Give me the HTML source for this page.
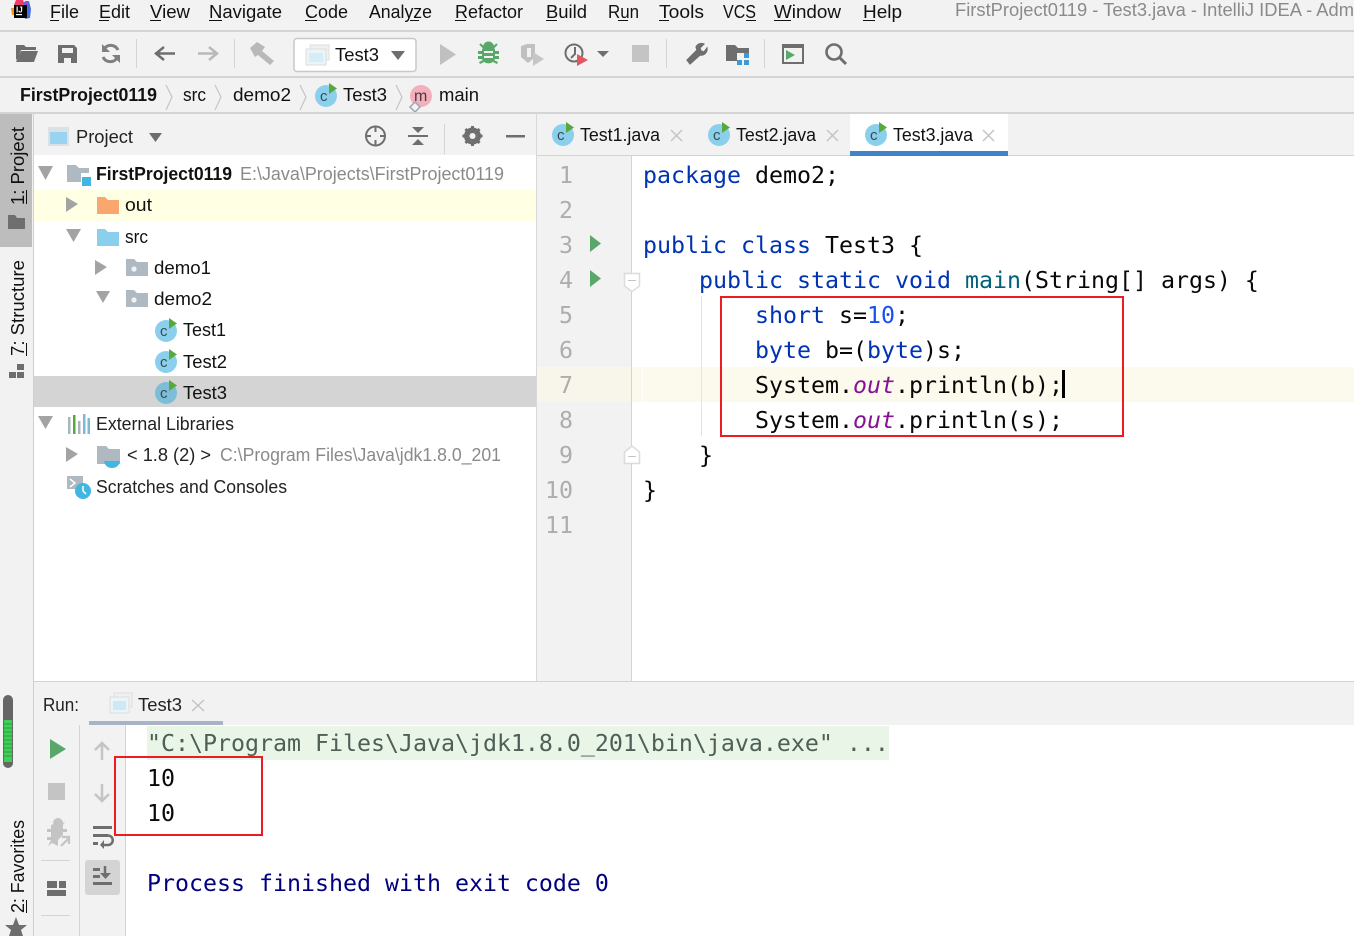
<!DOCTYPE html>
<html><head><meta charset="utf-8"><title>IntelliJ IDEA</title>
<style>
html,body{margin:0;padding:0;background:#f2f2f2;overflow:hidden}
svg{display:block}
text{font-family:"Liberation Sans",sans-serif;font-size:18px;fill:#111;white-space:pre}
.code text,text.m{font-family:"DejaVu Sans Mono","Liberation Mono",monospace;font-size:23.26px;fill:#080808}
.k{fill:#0033b3}.n{fill:#1750eb}.f{fill:#871094;font-style:italic}.me{fill:#00627a}
.g{fill:#6e6e6e}.ln{fill:#adadad;font-family:"DejaVu Sans Mono",monospace;font-size:23.26px}
.c{font-size:15px;fill:#3b4a55}
</style></head><body>
<svg width="1354" height="936" viewBox="0 0 1354 936" xmlns="http://www.w3.org/2000/svg">
<defs>
<g id="cl"><circle cx="0" cy="0" r="11" fill="#8ad0ec"/><path d="M3 -13L11 -7.500L3 -2Z" fill="#59a83c"/></g>
<g id="fd"><path d="M0 0H8L11 3H22V17H0Z" fill="#afb9c1"/><circle cx="8" cy="10" r="2.600" fill="#f2f2f2"/></g>
</defs>
<rect width="1354" height="936" fill="#f2f2f2"/>

<!-- logo -->
<g><path d="M14 5L16 0H23L25 5Z" fill="#ef3a6a"/><path d="M11 8H15V15H12Z" fill="#f7941d"/><path d="M24 2L29 1L31 9L30 18L25 19Z" fill="#4a6be0"/><path d="M25 1H28V5H25Z" fill="#c13bc0"/><rect x="14" y="5" width="13" height="13" fill="#000"/><rect x="16" y="14" width="6" height="1.200" fill="#fff"/><text x="16" y="12.500" style="font-size:8px;font-weight:bold;fill:#fff">IJ</text></g>

<!-- menu -->
<g>
<text x="50" y="18" textLength="29" lengthAdjust="spacingAndGlyphs">File</text><rect x="50" y="20" width="9" height="1" fill="#111"/>
<text x="99" y="18" textLength="31" lengthAdjust="spacingAndGlyphs">Edit</text><rect x="99" y="20" width="10" height="1" fill="#111"/>
<text x="150" y="18" textLength="40" lengthAdjust="spacingAndGlyphs">View</text><rect x="150" y="20" width="11" height="1" fill="#111"/>
<text x="209" y="18" textLength="73" lengthAdjust="spacingAndGlyphs">Navigate</text><rect x="209" y="20" width="13" height="1" fill="#111"/>
<text x="305" y="18" textLength="43" lengthAdjust="spacingAndGlyphs">Code</text><rect x="305" y="20" width="12" height="1" fill="#111"/>
<text x="369" y="18" textLength="63" lengthAdjust="spacingAndGlyphs">Analyze</text><rect x="410" y="20" width="9" height="1" fill="#111"/>
<text x="455" y="18" textLength="68" lengthAdjust="spacingAndGlyphs">Refactor</text><rect x="455" y="20" width="11" height="1" fill="#111"/>
<text x="546" y="18" textLength="41" lengthAdjust="spacingAndGlyphs">Build</text><rect x="546" y="20" width="11" height="1" fill="#111"/>
<text x="608" y="18" textLength="31" lengthAdjust="spacingAndGlyphs">Run</text><rect x="618" y="20" width="10" height="1" fill="#111"/>
<text x="659" y="18" textLength="45" lengthAdjust="spacingAndGlyphs">Tools</text><rect x="659" y="20" width="10" height="1" fill="#111"/>
<text x="723" y="18" textLength="33" lengthAdjust="spacingAndGlyphs">VCS</text><rect x="746" y="20" width="10" height="1" fill="#111"/>
<text x="774" y="18" textLength="67" lengthAdjust="spacingAndGlyphs">Window</text><rect x="774" y="20" width="17" height="1" fill="#111"/>
<text x="863" y="18" textLength="39" lengthAdjust="spacingAndGlyphs">Help</text><rect x="863" y="20" width="12" height="1" fill="#111"/>
<text x="955" y="16" textLength="399" lengthAdjust="spacingAndGlyphs" style="fill:#8a8a8a">FirstProject0119 - Test3.java - IntelliJ IDEA - Adm</text>
</g>
<rect y="30" width="1354" height="2" fill="#d4d4d4"/>

<!-- toolbar -->
<g>
<path d="M16 45H24L26 47H36V50H21L18 58L16 60ZM21 51H38L34 62H16Z" fill="#6e6e6e"/>
<path d="M58 45H74L77 48V63H58ZM62 48V53H73V48ZM64 58V63H71V58Z" fill="#6e6e6e" fill-rule="evenodd"/>
<path d="M118 50A8 8 0 0 0 104 49M103 57A8 8 0 0 0 117 58" fill="none" stroke="#7f7f7f" stroke-width="3"/><path d="M102 44V52H110ZM120 63V55H112Z" fill="#7f7f7f"/>
<rect x="136" y="39" width="1" height="29" fill="#d4d4d4"/>
<path d="M175 53.500H157M164 47L156 53.500L164 60" fill="none" stroke="#6e6e6e" stroke-width="2.500"/>
<path d="M198 53.500H216M209 47L217 53.500L209 60" fill="none" stroke="#b9b9b9" stroke-width="2.500"/>
<rect x="234" y="39" width="1" height="29" fill="#d4d4d4"/>
<path d="M250 48L257 42L265 47L262 51L274 61L270 65L258 55L255 57Z" fill="#b9b9b9"/>
<rect x="294" y="38.500" width="122" height="33" rx="3" fill="#fff" stroke="#c8c8c8" stroke-width="1.500"/>
<rect x="310" y="45" width="19" height="15" fill="#f0f0f0" stroke="#dedede"/><rect x="306" y="49" width="20" height="16" fill="#eaf5fa" stroke="#dedede"/><rect x="309" y="53" width="14" height="9" fill="#d6edf7"/>
<text x="335" y="61" textLength="44" lengthAdjust="spacingAndGlyphs">Test3</text>
<path d="M391 51H405L398 60Z" fill="#6e6e6e"/>
<path d="M440 44L456 54.500L440 65Z" fill="#c0c0c0"/>
<path d="M483 47A5 5 0 0 1 494 47L495 50V59A7 7 0 0 1 482 59V50Z" fill="#59a869"/><path d="M480 44L484 48M497 44L493 48" stroke="#59a869" stroke-width="2"/><path d="M478 51H499V54H478ZM478 56H499V59H478ZM479 62L483 60L484 62L480 64ZM498 62L494 60L493 62L497 64Z" fill="#59a869"/><rect x="484" y="51" width="9" height="2" fill="#f2f2f2"/><rect x="484" y="56" width="9" height="2" fill="#f2f2f2"/>
<path d="M521 46L527 44H535V57L528 63L521 57Z" fill="#c0c0c0"/><path d="M527 48V57H531V48Z" fill="#f2f2f2"/><path d="M533 52L544 59L533 66Z" fill="#c6c6c6"/>
<circle cx="574" cy="53" r="8.500" fill="none" stroke="#6e6e6e" stroke-width="2"/><path d="M575 47V54L571 58" fill="none" stroke="#6e6e6e" stroke-width="2"/>
<path d="M577 54L588 60L577 66Z" fill="#e0575f" stroke="#f2f2f2" stroke-width="0"/>
<path d="M597 51H609L603 57Z" fill="#6e6e6e"/>
<rect x="632" y="45" width="17" height="17" fill="#c4c4c4"/>
<rect x="666" y="39" width="1" height="29" fill="#d4d4d4"/>
<path d="M687 60L697 50L696 47A6 6 0 0 1 704 44L700 48L701 51L704 52L707 48A6 6 0 0 1 700 55L690 64Z" fill="#6e6e6e" stroke="#6e6e6e" stroke-width="1.200"/>
<path d="M726 45H735L738 48H749V61H726Z" fill="#6e6e6e"/><rect x="737" y="53" width="13" height="12" fill="#f2f2f2"/><rect x="737" y="60" width="5" height="5" fill="#3d9ad9"/><rect x="744" y="60" width="5" height="5" fill="#3d9ad9"/><rect x="744" y="53" width="5" height="5" fill="#3d9ad9"/>
<rect x="764" y="39" width="1" height="29" fill="#d4d4d4"/>
<rect x="783" y="45" width="20" height="18" fill="none" stroke="#6e6e6e" stroke-width="2"/><rect x="782" y="44" width="22" height="4" fill="#6e6e6e"/><path d="M786 50L795 55L786 60Z" fill="#59a869"/>
<circle cx="834" cy="52" r="7.500" fill="none" stroke="#6e6e6e" stroke-width="2.600"/><path d="M839 57L846 64" stroke="#6e6e6e" stroke-width="3"/>
</g>
<rect y="76" width="1354" height="2" fill="#d4d4d4"/>

<!-- breadcrumbs -->
<g>
<text x="20" y="101" textLength="137" lengthAdjust="spacingAndGlyphs" style="font-weight:bold">FirstProject0119</text>
<path d="M166 85L172 97L166 110M215 85L221 97L215 110M300 85L306 97L300 110M396 85L402 97L396 110" fill="none" stroke="#c4c4c4" stroke-width="1.200"/>
<text x="183" y="101" textLength="23" lengthAdjust="spacingAndGlyphs">src</text>
<text x="233" y="101" textLength="58" lengthAdjust="spacingAndGlyphs">demo2</text>
<use href="#cl" x="326" y="96"/><text x="320" y="101" class="c">c</text>
<text x="343" y="101" textLength="44" lengthAdjust="spacingAndGlyphs">Test3</text>
<circle cx="421" cy="96" r="11" fill="#f4afbd"/><text x="414" y="101" style="font-size:16px;fill:#4a3a3f">m</text><path d="M415 102L420 107L415 112L410 107Z" fill="#f2f2f2" stroke="#9aa7b0" stroke-width="1.500"/>
<text x="439" y="101" textLength="40" lengthAdjust="spacingAndGlyphs">main</text>
</g>
<rect y="112" width="1354" height="2" fill="#d4d4d4"/>

<!-- left stripe -->
<rect x="33" y="114" width="1" height="822" fill="#cfcfcf"/>
<rect x="0" y="114" width="32" height="133" fill="#bdbdbd"/>
<text transform="translate(24,205) rotate(-90)" textLength="78" lengthAdjust="spacingAndGlyphs">1: Project</text>
<rect x="26" y="190" width="1" height="14" fill="#111"/>
<path d="M8 215H15L17 218H25V229H8Z" fill="#6e6e6e"/>
<text transform="translate(24,356) rotate(-90)" textLength="96" lengthAdjust="spacingAndGlyphs">7: Structure</text>
<rect x="26" y="343" width="1" height="13" fill="#111"/>
<path d="M17 364H24V370H17ZM9 372H16V378H9ZM17 372H24V378H17Z" fill="#6e6e6e"/>

<!-- project header -->
<g>
<rect x="48" y="127" width="21" height="19" fill="#dbe1e6"/><rect x="50" y="132" width="17" height="12" fill="#98d3ef"/>
<text x="76" y="143" textLength="57" lengthAdjust="spacingAndGlyphs" style="fill:#222">Project</text>
<path d="M149 133H162L155.500 142Z" fill="#6e6e6e"/>
<circle cx="375.500" cy="136" r="9.500" fill="none" stroke="#6e6e6e" stroke-width="2"/><path d="M375.500 127V132M375.500 140V145M366 136H371M380 136H385" stroke="#6e6e6e" stroke-width="2"/>
<path d="M408 136H428" stroke="#6e6e6e" stroke-width="2"/><path d="M412 127H424L418 133ZM412 145H424L418 139Z" fill="#6e6e6e"/>
<rect x="444" y="124" width="1" height="30" fill="#d4d4d4"/>
<circle cx="472.500" cy="136" r="6.500" fill="none" stroke="#6e6e6e" stroke-width="4"/><path d="M472.500 126V146M462.500 136H482.500M465.500 129L479.500 143M479.500 129L465.500 143" stroke="#6e6e6e" stroke-width="3"/><circle cx="472.500" cy="136" r="3" fill="#f2f2f2"/>
<rect x="506" y="135" width="19" height="2.500" fill="#6e6e6e"/>
</g>

<!-- tree -->
<rect x="34" y="155" width="503" height="527" fill="#fff"/>
<rect x="34" y="190" width="503" height="31" fill="#ffffe4"/>
<rect x="34" y="376" width="503" height="31" fill="#d4d4d4"/>
<g>
<path d="M38 166H53L45.500 180Z" fill="#a3a3a3"/>
<path d="M67 165H76L79 168H89V173H81V182H67Z" fill="#afb9c1"/><rect x="82" y="177" width="9" height="9" fill="#40b6e0"/>
<text x="96" y="180" textLength="136" lengthAdjust="spacingAndGlyphs" style="font-weight:bold">FirstProject0119</text>
<text x="240" y="180" textLength="264" lengthAdjust="spacingAndGlyphs" style="fill:#8a8a8a">E:\Java\Projects\FirstProject0119</text>

<path d="M66 197L78 204L66 212Z" fill="#a3a3a3"/>
<path d="M97 197H105L108 200H119V214H97Z" fill="#f9a76f"/>
<text x="125" y="211" textLength="27" lengthAdjust="spacingAndGlyphs">out</text>

<path d="M66 229H81L73.500 242Z" fill="#a3a3a3"/>
<path d="M97 229H105L108 232H119V246H97Z" fill="#8ad0ec"/>
<text x="125" y="243" textLength="23" lengthAdjust="spacingAndGlyphs">src</text>

<path d="M95 260L107 267L95 275Z" fill="#a3a3a3"/>
<use href="#fd" x="126" y="259"/>
<text x="154" y="274" textLength="57" lengthAdjust="spacingAndGlyphs">demo1</text>

<path d="M96 291H110L103 303Z" fill="#a3a3a3"/>
<use href="#fd" x="126" y="290"/>
<text x="154" y="305" textLength="58" lengthAdjust="spacingAndGlyphs">demo2</text>

<use href="#cl" x="166" y="331"/><text x="160" y="336" class="c">c</text>
<text x="183" y="336" textLength="43" lengthAdjust="spacingAndGlyphs">Test1</text>
<use href="#cl" x="166" y="362"/><text x="160" y="367" class="c">c</text>
<text x="183" y="368" textLength="44" lengthAdjust="spacingAndGlyphs">Test2</text>
<circle cx="166" cy="393" r="11" fill="#7dbdd8"/><path d="M169 380L177 385.500L169 391Z" fill="#59a83c"/><text x="160" y="398" class="c">c</text>
<text x="183" y="399" textLength="44" lengthAdjust="spacingAndGlyphs">Test3</text>

<path d="M38 416H53L45.500 429Z" fill="#a3a3a3"/>
<path d="M68 417h2.500v17h-2.500zM78 421h2.500v13h-2.500z" fill="#a9b5bd"/><rect x="73" y="415" width="2.500" height="19" fill="#59a83c"/><path d="M83 414h2.500v20h-2.500zM87.500 418h2.500v16h-2.500z" fill="#7fb9d4"/>
<text x="96" y="430" textLength="138" lengthAdjust="spacingAndGlyphs" style="fill:#222">External Libraries</text>

<path d="M66 447L78 454L66 462Z" fill="#a3a3a3"/>
<path d="M97 446H106L109 449H120V464H97Z" fill="#afb9c1"/><path d="M104 461H120C119 466 116 468 112 468C108 468 105 466 104 461Z" fill="#40b6e0"/>
<text x="127" y="461" textLength="84" lengthAdjust="spacingAndGlyphs" style="fill:#222">&lt; 1.8 (2) &gt;</text>
<text x="220" y="461" textLength="281" lengthAdjust="spacingAndGlyphs" style="fill:#8a8a8a">C:\Program Files\Java\jdk1.8.0_201</text>

<rect x="67" y="476" width="16" height="13" fill="#afb9c1"/><path d="M70 479L75 483L70 487" fill="none" stroke="#fff" stroke-width="1.500"/>
<circle cx="83" cy="491" r="8" fill="#40b6e0"/><path d="M83 486V491L86 494" fill="none" stroke="#fff" stroke-width="1.500"/>
<text x="96" y="493" textLength="191" lengthAdjust="spacingAndGlyphs" style="fill:#222">Scratches and Consoles</text>
</g>

<!-- tabs -->
<g>
<use href="#cl" x="563" y="135"/><text x="557" y="140" class="c">c</text>
<text x="580" y="141" textLength="80" lengthAdjust="spacingAndGlyphs">Test1.java</text>
<path d="M671 130L682 141M682 130L671 141" stroke="#c4c4c4" stroke-width="1.500"/>
<use href="#cl" x="719" y="135"/><text x="713" y="140" class="c">c</text>
<text x="736" y="141" textLength="80" lengthAdjust="spacingAndGlyphs">Test2.java</text>
<path d="M827 130L838 141M838 130L827 141" stroke="#c4c4c4" stroke-width="1.500"/>
<rect x="850" y="114" width="158" height="38" fill="#fff"/><rect x="850" y="151" width="158" height="5" fill="#4083c9"/>
<use href="#cl" x="876" y="135"/><text x="870" y="140" class="c">c</text>
<text x="893" y="141" textLength="80" lengthAdjust="spacingAndGlyphs">Test3.java</text>
<path d="M983 130L994 141M994 130L983 141" stroke="#c4c4c4" stroke-width="1.500"/>
</g>
<rect x="537" y="155" width="313" height="1" fill="#d4d4d4"/>
<rect x="1008" y="155" width="346" height="1" fill="#d4d4d4"/>

<!-- editor -->
<rect x="536" y="114" width="1" height="568" fill="#d8d8d8"/>
<rect x="632" y="156" width="722" height="526" fill="#fff"/>
<rect x="631" y="156" width="1" height="526" fill="#d4d4d4"/>
<rect x="537" y="367" width="94" height="35" fill="#f8f6ea"/>
<rect x="632" y="367" width="722" height="35" fill="#fcfaed"/>
<rect x="642" y="367" width="1" height="35" fill="#ffffff"/>
<rect x="701" y="296" width="1" height="140" fill="#e3e3e3"/>
<g>
<text class="ln" x="559" y="183">1</text><text class="ln" x="559" y="218">2</text><text class="ln" x="559" y="253">3</text><text class="ln" x="559" y="288">4</text><text class="ln" x="559" y="323">5</text><text class="ln" x="559" y="358">6</text><text class="ln" x="559" y="393">7</text><text class="ln" x="559" y="428">8</text><text class="ln" x="559" y="463">9</text><text class="ln" x="545" y="498">10</text><text class="ln" x="545" y="533">11</text>
</g>
<path d="M590 235L601 243.500L590 252ZM590 270L601 278.500L590 287Z" fill="#59a869"/>
<path d="M624.500 273.500H639.500V286L632 291.500L624.500 286Z" fill="#fff" stroke="#dcdcdc" stroke-width="1.500"/><rect x="628" y="280" width="8" height="1" fill="#c4c4c4"/>
<path d="M624.500 463.500H639.500V452L632 446L624.500 452Z" fill="#fff" stroke="#dcdcdc" stroke-width="1.500"/><rect x="628" y="456" width="8" height="1" fill="#c4c4c4"/>
<g class="code">
<text x="643" y="183" xml:space="preserve"><tspan class="k">package</tspan> demo2;</text>
<text x="643" y="253" xml:space="preserve"><tspan class="k">public class</tspan> Test3 {</text>
<text x="699" y="288" xml:space="preserve"><tspan class="k">public static void</tspan> <tspan class="me">main</tspan>(String[] args) {</text>
<text x="755" y="323" xml:space="preserve"><tspan class="k">short</tspan> s=<tspan class="n">10</tspan>;</text>
<text x="755" y="358" xml:space="preserve"><tspan class="k">byte</tspan> b=(<tspan class="k">byte</tspan>)s;</text>
<text x="755" y="393" xml:space="preserve">System.<tspan class="f">out</tspan>.println(b);</text>
<text x="755" y="428" xml:space="preserve">System.<tspan class="f">out</tspan>.println(s);</text>
<text x="699" y="463">}</text>
<text x="643" y="498">}</text>
</g>
<rect x="1062" y="370" width="3" height="28" fill="#000"/>
<rect x="721" y="297" width="402" height="139" fill="none" stroke="#ed1c24" stroke-width="2"/>

<!-- run panel -->
<rect x="34" y="681" width="1320" height="1" fill="#d4d4d4"/>
<text x="43" y="711" textLength="36" lengthAdjust="spacingAndGlyphs" style="fill:#222">Run:</text>
<rect x="114" y="693" width="18" height="14" fill="#f0f0f0" stroke="#dedede"/><rect x="110" y="697" width="19" height="16" fill="#eaf5fa" stroke="#dedede"/><rect x="113" y="701" width="13" height="9" fill="#cfe9f4"/>
<text x="138" y="711" textLength="44" lengthAdjust="spacingAndGlyphs" style="fill:#222">Test3</text>
<path d="M192 700L204 711M204 700L192 711" stroke="#c4c4c4" stroke-width="1.500"/>
<rect x="89" y="721" width="134" height="4" fill="#a9b3c6"/>
<rect x="79" y="725" width="1" height="211" fill="#d4d4d4"/>
<rect x="125" y="725" width="1" height="211" fill="#d4d4d4"/>
<rect x="126" y="725" width="1228" height="211" fill="#fff"/>
<rect x="147" y="726" width="742" height="34" fill="#e9f5e6"/>
<g class="code">
<text x="147" y="751" style="fill:#4d5f56">"C:\Program Files\Java\jdk1.8.0_201\bin\java.exe" ...</text>
<text x="147" y="786">10</text>
<text x="147" y="821">10</text>
<text x="147" y="891" style="fill:#000080">Process finished with exit code 0</text>
</g>
<rect x="115" y="757" width="147" height="78" fill="none" stroke="#ed1c24" stroke-width="2"/>

<!-- run toolbars -->
<path d="M50 739L66 749L50 759Z" fill="#59a869"/>
<rect x="48" y="783" width="17" height="17" fill="#c4c4c4"/>
<path d="M54 824L51 821L53 823A5 5 0 0 1 63 823L65 821L63 825V829H67V832H63V835L58 840V846L52 843L48 846L51 840H47V837H51V832H47V829H51V825Z" fill="#c4c4c4"/><path d="M61 846L69 838M62 837H69V844" fill="none" stroke="#c4c4c4" stroke-width="2.200"/>
<rect x="41" y="860" width="29" height="1" fill="#d4d4d4"/>
<path d="M47 881H57V888H47ZM59 881H66V888H59ZM47 890H66V896H47Z" fill="#6e6e6e"/>
<rect x="41" y="915" width="29" height="1" fill="#d4d4d4"/>
<path d="M102 760V743M95 750L102 743L109 750" fill="none" stroke="#c4c4c4" stroke-width="2.500"/>
<path d="M102 784V801M95 794L102 801L109 794" fill="none" stroke="#c4c4c4" stroke-width="2.500"/>
<rect x="93" y="826" width="19" height="3" fill="#6e6e6e"/><rect x="93" y="834" width="15" height="3" fill="#6e6e6e"/><rect x="93" y="842" width="5" height="3" fill="#6e6e6e"/>
<path d="M108 835.500A4.500 4.500 0 0 1 108 845H103" fill="none" stroke="#6e6e6e" stroke-width="2.500"/><path d="M104 840L100 845L104 849Z" fill="#6e6e6e"/>
<rect x="85" y="860" width="35" height="35" rx="3" fill="#d4d4d4"/>
<path d="M93 868H100V871H93ZM93 875H100V878H93ZM93 882H112V885H93Z" fill="#6e6e6e"/><path d="M105 866V874" stroke="#6e6e6e" stroke-width="2.500"/><path d="M100 873H111L105.500 879Z" fill="#6e6e6e"/>

<!-- memory + favorites -->
<rect x="3" y="695" width="10" height="73" rx="5" fill="#666"/>
<rect x="4" y="720" width="8" height="42" fill="#3fcf56"/>
<path d="M4 724H12M4 728H12M4 732H12M4 736H12M4 740H12M4 744H12M4 748H12M4 752H12M4 756H12" stroke="#2b9b3e" stroke-width="1"/>
<text transform="translate(24,913) rotate(-90)" textLength="93" lengthAdjust="spacingAndGlyphs">2: Favorites</text>
<rect x="26" y="900" width="1" height="13" fill="#111"/>
<path d="M16 917L19 925H27L21 930L23 936H9L11 930L5 925H13Z" fill="#6e6e6e"/>
</svg>
</body></html>
